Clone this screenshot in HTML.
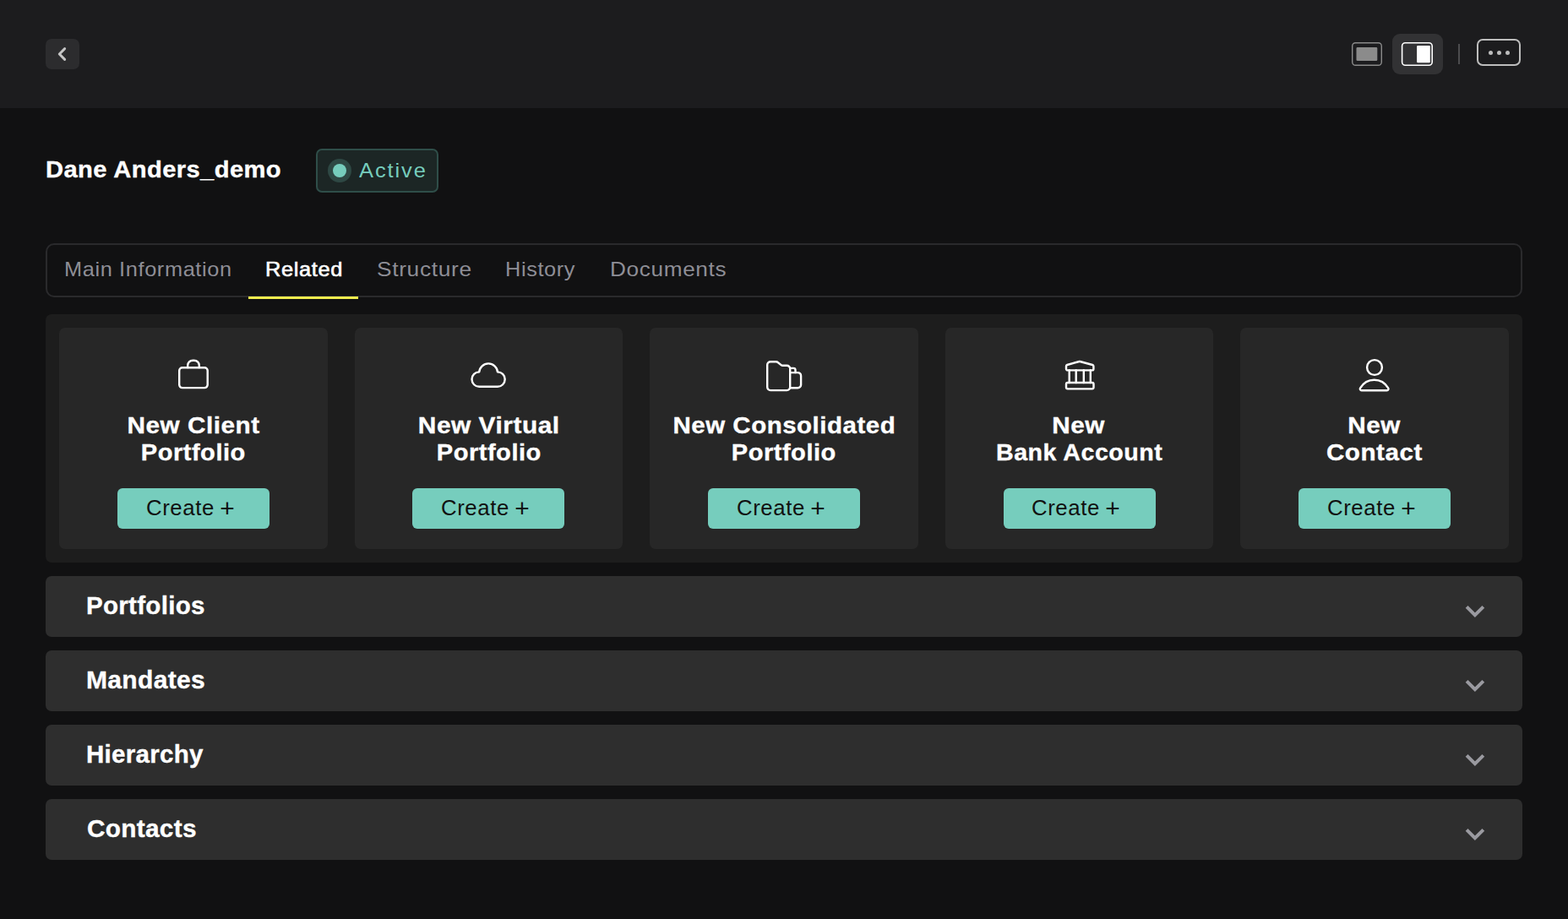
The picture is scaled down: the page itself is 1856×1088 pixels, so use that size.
<!DOCTYPE html>
<html lang="en">
<head>
<meta charset="utf-8">
<title>Dane Anders_demo</title>
<style>
*{box-sizing:border-box;margin:0;padding:0}
html,body{width:1856px;height:1088px;overflow:hidden;background:#111112}
body{font-family:"Liberation Sans",sans-serif;color:#fff;position:relative}
.topbar{position:absolute;left:0;top:0;width:1856px;height:128px;background:#1c1c1e}
.back{position:absolute;left:54px;top:46px;width:40px;height:36px;border-radius:7px;background:#2c2c2e}
.back svg{position:absolute;left:0;top:0}
.vicons{position:absolute;left:1590px;top:36px}
.view2bg{position:absolute;left:1648px;top:40px;width:60px;height:48px;border-radius:9px;background:#323234}
.vdiv{position:absolute;left:1726px;top:52px;width:1.6px;height:24px;background:#4c4c4e}
.more{position:absolute;left:1748px;top:46px;width:52px;height:32px;border:2px solid #bdbdbd;border-radius:7px}
.more b{position:absolute;top:11.9px;width:5px;height:5px;border-radius:50%;background:#bdbdbd}
h1{position:absolute;left:54px;top:183.4px;font-size:28px;line-height:36px;font-weight:700;letter-spacing:.4px;white-space:nowrap;transform-origin:0 50%;transform:scaleX(var(--sx,1))}
.badge{position:absolute;left:374px;top:176px;width:145px;height:52px;border:2px solid #2f4e49;border-radius:7px;background:#1c2625}
.badge .halo{position:absolute;left:12px;top:10px;width:28px;height:28px;border-radius:50%;background:#2e4844}
.badge .dot{position:absolute;left:6px;top:6px;width:16px;height:16px;border-radius:50%;background:#76cdbd}
.badge span{position:absolute;left:48.5px;top:8px;font-size:24px;line-height:32px;color:#76cdbd;letter-spacing:1.8px;transform-origin:0 50%;transform:scaleX(var(--sx,1))}
.tabs{position:absolute;left:54px;top:288px;width:1748px;height:64px;border:2px solid #2a2a2c;border-radius:10px}
.tab{position:absolute;top:13.4px;font-size:24px;line-height:32px;color:#8e8e96;white-space:nowrap;letter-spacing:.6px;transform-origin:0 50%;transform:scaleX(var(--sx,1))}
.tab.on{color:#fff;font-weight:400;-webkit-text-stroke:.6px #fff}
.uline{position:absolute;left:294px;top:351px;width:130px;height:3px;background:#f4ee4e}
.cards{position:absolute;left:54px;top:372px;width:1748px;height:294px;border-radius:7px;background:#1d1d1d}
.card{position:absolute;top:16px;width:317.6px;height:262px;border-radius:7px;background:#272727}
.card svg{position:absolute;left:0;top:0}
.card h3{position:absolute;left:0;width:317.6px;top:99.6px;text-align:center;font-size:28px;line-height:32px;font-weight:700;letter-spacing:.5px;white-space:nowrap}
.card h3 span{display:inline-block;transform-origin:50% 50%;transform:translateX(var(--dx,0px)) scaleX(var(--sx,1))}
.card .btn{position:absolute;left:68.8px;top:190px;width:180px;height:48px;border-radius:6px;background:#76cdbd;color:#111;font-size:25px;line-height:46px;text-align:center;letter-spacing:.6px}
.card .btn span{display:inline-block;transform-origin:50% 50%;transform:translateX(var(--dx,0px)) scaleX(var(--sx,1))}
.row{position:absolute;left:54px;width:1748px;height:72px;border-radius:7px;background:#2e2e2e}
.row h2{position:absolute;left:48px;top:17.4px;font-size:29.5px;line-height:36px;font-weight:700;letter-spacing:.3px;white-space:nowrap;transform-origin:0 50%;transform:scaleX(var(--sx,1))}
.row svg{position:absolute;right:40px;top:28px}
h1,.card h3,.row h2{-webkit-text-stroke:.35px #fff}
.btn i{font-style:normal;font-size:29px;line-height:0;position:relative;top:2.4px;margin-left:-1.5px}
</style>
</head>
<body>
<div class="topbar">
  <div class="back"><svg width="40" height="36" viewBox="0 0 40 36"><path d="M22.6 11.65 L16.3 18 L22.6 24.35" fill="none" stroke="#c6c6c6" stroke-width="3" stroke-linecap="round" stroke-linejoin="round"/></svg></div>
  <div class="view2bg"></div>
  <svg class="vicons" width="130" height="56" viewBox="1590 36 130 56"><rect x="1600.7" y="50.7" width="34.6" height="26.6" rx="3.8" fill="none" stroke="#8a8a8a" stroke-width="1.4"/><rect x="1605.5" y="56.1" width="24.8" height="15.9" rx="1.3" fill="#8b8b8b"/><rect x="1659.6" y="50.8" width="35.6" height="26.4" rx="3.8" fill="none" stroke="#fff" stroke-width="1.6"/><rect x="1677.1" y="54" width="15.7" height="20.3" rx="1" fill="#fff"/></svg>
  <div class="vdiv"></div>
  <div class="more"><b style="left:11.6px"></b><b style="left:21.6px"></b><b style="left:31.7px"></b></div>
</div>
<h1 style="--sx:1.04">Dane Anders_demo</h1>
<div class="badge"><div class="halo"><div class="dot"></div></div><span style="--sx:1.061">Active</span></div>
<div class="tabs">
  <div class="tab" style="left:20.2px;--sx:1.055">Main Information</div>
  <div class="tab on" style="left:258px;--sx:1.06">Related</div>
  <div class="tab" style="left:389.5px;--sx:1.097">Structure</div>
  <div class="tab" style="left:542.3px;--sx:1.054">History</div>
  <div class="tab" style="left:665.9px;--sx:1.09">Documents</div>
</div>
<div class="uline"></div>
<div class="cards">
  <div class="card" style="left:16px">
    <svg width="318" height="262" viewBox="70 388 318 262"><g fill="none" stroke="#fff" stroke-width="2.4" stroke-linejoin="round" stroke-linecap="round"><rect x="212.2" y="435.2" width="33.5" height="23.9" rx="3.6"/><path d="M222.2 435V432.7a6 6 0 0 1 6-6h1.6a6 6 0 0 1 6 6V435"/></g></svg>
    <h3><span style="--sx:1.061">New Client</span><br><span style="--sx:1.037">Portfolio</span></h3>
    <div class="btn"><span style="--sx:1.03;--dx:-3.5px">Create <i>+</i></span></div>
  </div>
  <div class="card" style="left:365.6px">
    <svg width="318" height="262" viewBox="419.6 388 318 262"><g fill="none" stroke="#fff" stroke-width="2.4" stroke-linejoin="round" stroke-linecap="round"><path d="M566.8 457.8A8.7 8.7 0 0 1 566.8 440.4A10.94 10.94 0 0 1 588.6 440.4A8.7 8.7 0 0 1 588.6 457.8Z"/></g></svg>
    <h3><span style="--sx:1.066">New Virtual</span><br><span style="--sx:1.037">Portfolio</span></h3>
    <div class="btn"><span style="--sx:1.03;--dx:-3.5px">Create <i>+</i></span></div>
  </div>
  <div class="card" style="left:715.2px">
    <svg width="318" height="262" viewBox="769.2 388 318 262"><g fill="none" stroke="#fff" stroke-width="2.4" stroke-linejoin="round" stroke-linecap="round"><path d="M912.2 428.3H919a3 3 0 0 1 1.9 .7L924.8 432.1a3 3 0 0 0 1.9 .7H931.6a3.8 3.8 0 0 1 3.8 3.8V458.3a3.8 3.8 0 0 1 -3.8 3.8H912.2a3.8 3.8 0 0 1 -3.8 -3.8V432.1a3.8 3.8 0 0 1 3.8 -3.8Z"/><path d="M935.4 435.9H939.5a2.2 2.2 0 0 1 2.2 2.2V441.1H944.5a3.8 3.8 0 0 1 3.8 3.8V455.4a3.8 3.8 0 0 1 -3.8 3.8H935.4"/><path d="M935.4 441.1H941.7"/></g></svg>
    <h3><span style="--sx:1.052">New Consolidated</span><br><span style="--sx:1.037">Portfolio</span></h3>
    <div class="btn"><span style="--sx:1.03;--dx:-3.5px">Create <i>+</i></span></div>
  </div>
  <div class="card" style="left:1064.8px">
    <svg width="318" height="262" viewBox="1118.8 388 318 262"><g fill="none" stroke="#fff" stroke-width="2.4" stroke-linejoin="round" stroke-linecap="round"><path d="M1263.5 438.4a1.7 1.7 0 0 1 -1.7 -1.7V433.5a1.6 1.6 0 0 1 1.1 -1.5L1277.3 428a1.6 1.6 0 0 1 .9 0L1293 432a1.6 1.6 0 0 1 1.2 1.5V436.7a1.7 1.7 0 0 1 -1.7 1.7Z"/><path d="M1265.5 438.3V453M1273.5 438.3V453M1282.6 438.3V453M1290.6 438.3V453"/><rect x="1261.8" y="453" width="32.5" height="7.4" rx="1.8"/></g></svg>
    <h3><span style="--sx:1.06;--dx:-.9px">New</span><br><span style="--sx:1.021">Bank Account</span></h3>
    <div class="btn"><span style="--sx:1.03;--dx:-3.5px">Create <i>+</i></span></div>
  </div>
  <div class="card" style="left:1414.4px">
    <svg width="318" height="262" viewBox="1468.4 388 318 262"><g fill="none" stroke="#fff" stroke-width="2.4" stroke-linejoin="round" stroke-linecap="round"><circle cx="1627.4" cy="435" r="8.9"/><path d="M1612 462.2a1.8 1.8 0 0 1 -1.5 -2.8C1614 453.5 1620 449.7 1627.05 449.7C1634.1 449.7 1640.1 453.5 1643.6 459.4a1.8 1.8 0 0 1 -1.5 2.8Z"/></g></svg>
    <h3><span style="--sx:1.06;--dx:-.9px">New</span><br><span style="--sx:1.058">Contact</span></h3>
    <div class="btn"><span style="--sx:1.03;--dx:-3.5px">Create <i>+</i></span></div>
  </div>
</div>
<div class="row" style="top:682px"><h2>Portfolios</h2><svg width="32" height="24" viewBox="1730 710 32 24"><path d="M1736.1 718.4L1745.9 728.2L1755.8 718.4" fill="none" stroke="#9a9aa0" stroke-width="4"/></svg></div>
<div class="row" style="top:770px"><h2 style="--sx:1.018">Mandates</h2><svg width="32" height="24" viewBox="1730 710 32 24"><path d="M1736.1 718.4L1745.9 728.2L1755.8 718.4" fill="none" stroke="#9a9aa0" stroke-width="4"/></svg></div>
<div class="row" style="top:858px"><h2>Hierarchy</h2><svg width="32" height="24" viewBox="1730 710 32 24"><path d="M1736.1 718.4L1745.9 728.2L1755.8 718.4" fill="none" stroke="#9a9aa0" stroke-width="4"/></svg></div>
<div class="row" style="top:946px"><h2 style="left:49px;--sx:1.009">Contacts</h2><svg width="32" height="24" viewBox="1730 710 32 24"><path d="M1736.1 718.4L1745.9 728.2L1755.8 718.4" fill="none" stroke="#9a9aa0" stroke-width="4"/></svg></div>
</body>
</html>
